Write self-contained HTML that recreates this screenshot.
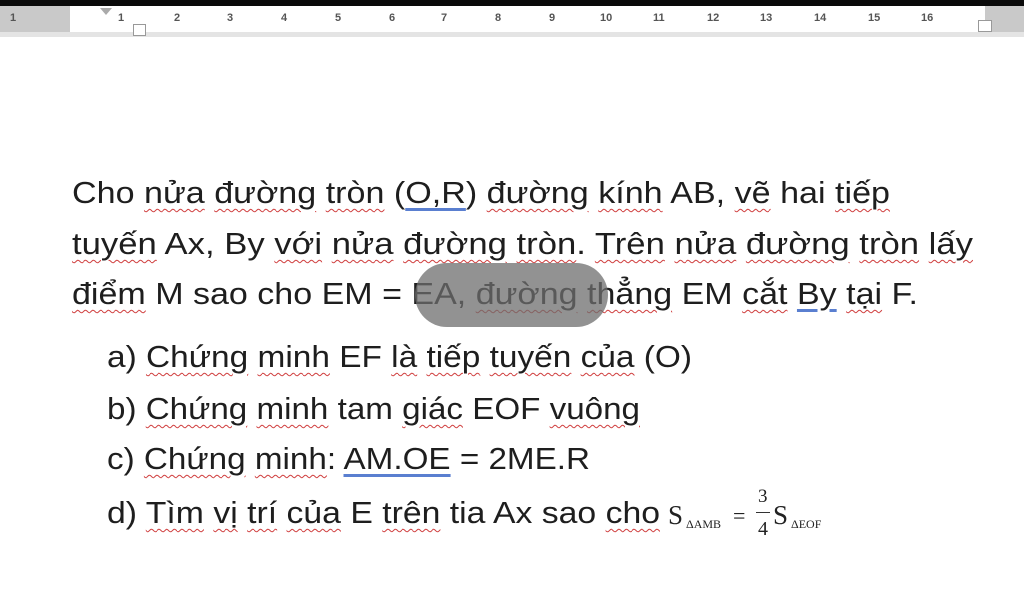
<!DOCTYPE html>
<html><head><meta charset="utf-8">
<style>
body{margin:0;width:1024px;height:594px;overflow:hidden;background:#fff;position:relative;font-family:"Liberation Sans","DejaVu Sans",sans-serif;}
.top{position:absolute;left:0;top:0;width:1024px;height:6px;background:#0a0a0a}
.ruler{position:absolute;left:0;top:6px;width:1024px;height:26px;background:#fff}
.rg{position:absolute;top:6px;height:26px;background:#c9c9c9}
.sh{position:absolute;left:0;top:32px;width:1024px;height:5px;background:#e4e4e4}
.rn{position:absolute;top:12px;font-size:11px;color:#555;font-weight:bold}
.ln{position:absolute;font-size:31px;color:#1e1e1e;white-space:nowrap;transform-origin:0 0;line-height:1}
.u{text-decoration:underline wavy #d04040;text-decoration-thickness:1px;text-underline-offset:5px}
.b{text-decoration:underline #5a7fd0;text-underline-offset:5px}
.pill{position:absolute;left:415px;top:263px;width:193px;height:64px;border-radius:32px;background:rgba(110,110,110,0.75)}
.m{font-family:"Liberation Serif",serif;color:#222;position:absolute;white-space:nowrap}
</style></head><body>
<div class="top"></div>
<div class="ruler"></div>
<div class="rg" style="left:0;width:70px"></div>
<div class="rg" style="left:985px;width:39px"></div>
<div class="sh"></div>
<div class="rn" style="left:10px">1</div>
<div class="rn" style="left:118px">1</div>
<div class="rn" style="left:174px">2</div>
<div class="rn" style="left:227px">3</div>
<div class="rn" style="left:281px">4</div>
<div class="rn" style="left:335px">5</div>
<div class="rn" style="left:389px">6</div>
<div class="rn" style="left:441px">7</div>
<div class="rn" style="left:495px">8</div>
<div class="rn" style="left:549px">9</div>
<div class="rn" style="left:600px">10</div>
<div class="rn" style="left:653px">11</div>
<div class="rn" style="left:707px">12</div>
<div class="rn" style="left:760px">13</div>
<div class="rn" style="left:814px">14</div>
<div class="rn" style="left:868px">15</div>
<div class="rn" style="left:921px">16</div>
<div style="position:absolute;left:100px;top:8px;width:0;height:0;border-left:6px solid transparent;border-right:6px solid transparent;border-top:7px solid #aaa"></div>
<div style="position:absolute;left:133px;top:24px;width:11px;height:10px;border:1px solid #999;background:#fff"></div>
<div style="position:absolute;left:978px;top:20px;width:12px;height:10px;border:1px solid #999;background:#fff"></div>

<div class="ln" data-w="818" style="left:72px;top:177px">Cho <span class="u">nửa</span> <span class="u">đường</span> <span class="u">tròn</span> (<span class="b">O,R</span>) <span class="u">đường</span> <span class="u">kính</span> AB, <span class="u">vẽ</span> hai <span class="u">tiếp</span></div>
<div class="ln" data-w="901" style="left:72px;top:228px"><span class="u">tuyến</span> Ax, By <span class="u">với</span> <span class="u">nửa</span> <span class="u">đường</span> <span class="u">tròn</span>. <span class="u">Trên</span> <span class="u">nửa</span> <span class="u">đường</span> <span class="u">tròn</span> <span class="u">lấy</span></div>
<div class="ln" data-w="846" style="left:72px;top:278px"><span class="u">điểm</span> M sao cho EM = EA, <span class="u">đường</span> <span class="u">thẳng</span> EM <span class="u">cắt</span> <span class="b">By</span> <span class="u">tại</span> F.</div>
<div class="pill"></div>
<div class="ln" data-w="585" style="left:107px;top:341px">a) <span class="u">Chứng</span> <span class="u">minh</span> EF <span class="u">là</span> <span class="u">tiếp</span> <span class="u">tuyến</span> <span class="u">của</span> (O)</div>
<div class="ln" data-w="533" style="left:107px;top:393px">b) <span class="u">Chứng</span> <span class="u">minh</span> tam <span class="u">giác</span> EOF <span class="u">vuông</span></div>
<div class="ln" data-w="483" style="left:107px;top:443px">c) <span class="u">Chứng</span> <span class="u">minh</span>: <span class="b">AM.OE</span> = 2ME.R</div>
<div class="ln" data-w="553" style="left:107px;top:497px">d) <span class="u">Tìm</span> <span class="u">vị</span> <span class="u">trí</span> <span class="u">của</span> E <span class="u">trên</span> tia Ax sao <span class="u">cho</span></div>
<div class="m" style="left:668px;top:500px;font-size:27px">S</div>
<div class="m" style="left:686px;top:517px;font-size:12px">ΔAMB</div>
<div class="m" style="left:733px;top:503px;font-size:22px">=</div>
<div class="m" style="left:758px;top:486px;font-size:19px">3</div>
<div style="position:absolute;left:756px;top:512px;width:14px;height:1px;background:#333"></div>
<div class="m" style="left:758px;top:518px;font-size:20px">4</div>
<div class="m" style="left:773px;top:500px;font-size:27px">S</div>
<div class="m" style="left:791px;top:517px;font-size:12px">ΔEOF</div>
<script>
document.querySelectorAll('.ln').forEach(function(e){var w=+e.getAttribute('data-w');var r=e.getBoundingClientRect().width;if(r>0)e.style.transform='scaleX('+(w/r)+')';});
</script>
</body></html>
